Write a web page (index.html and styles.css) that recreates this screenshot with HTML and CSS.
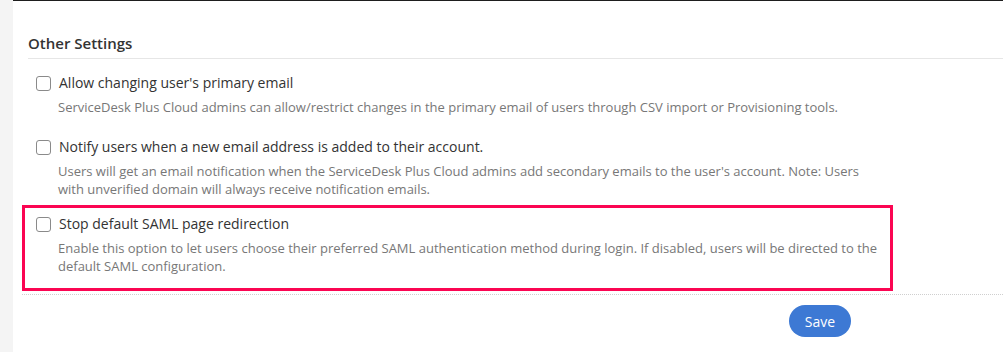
FILE: index.html
```html
<!DOCTYPE html>
<html lang="en">
<head>
<meta charset="utf-8">
<title>Other Settings</title>
<link rel="stylesheet" href="styles.css">
</head>
<body>
<div class="page">
  <aside class="rail"></aside>
  <main class="panel">
    <h2 class="settings-title">Other Settings</h2>
    <div class="options">
      <div class="opt">
        <label class="opt-head"><input type="checkbox" class="cb"><span class="opt-label">Allow changing user's primary email</span></label>
        <p class="opt-desc">ServiceDesk Plus Cloud admins can allow/restrict changes in the primary email of users through CSV import or Provisioning tools.</p>
      </div>
      <div class="opt">
        <label class="opt-head"><input type="checkbox" class="cb"><span class="opt-label">Notify users when a new email address is added to their account.</span></label>
        <p class="opt-desc">Users will get an email notification when the ServiceDesk Plus Cloud admins add secondary emails to the user's account. Note: Users with unverified domain will always receive notification emails.</p>
      </div>
      <div class="opt opt-highlight">
        <label class="opt-head"><input type="checkbox" class="cb"><span class="opt-label">Stop default SAML page redirection</span></label>
        <p class="opt-desc">Enable this option to let users choose their preferred SAML authentication method during login. If disabled, users will be directed to the default SAML configuration.</p>
      </div>
    </div>
    <div class="actions">
      <button class="btn-save" type="button">Save</button>
    </div>
  </main>
</div>
</body>
</html>
```

FILE: styles.css
```css
html, body {
  margin: 0;
  padding: 0;
  background: #ffffff;
  overflow: hidden;
}

.page {
  display: flex;
  width: 1003px;
  height: 352px;
  font-family: "Open Sans", "Liberation Sans", sans-serif;
}

.rail {
  width: 13px;
  flex: none;
  background: #f4f4f4;
}

.panel {
  flex: 1;
  border-top: 1px solid #1e1e1e;
  padding-top: 32px;
  display: flex;
  flex-direction: column;
}

.settings-title {
  margin: 0 0 0 15px;
  padding: 0 0 5px 0;
  font-size: 15px;
  font-weight: 600;
  line-height: 20px;
  color: #333333;
  border-bottom: 1px solid #e6e6e6;
}

.options {
  margin-left: 9px;
  width: 871px;
  padding-top: 14px;
  display: flex;
  flex-direction: column;
}

.opt {
  padding: 0 13px 0 14px;
}

.opt + .opt {
  margin-top: 21px;
}

.opt-head {
  display: flex;
  align-items: center;
  gap: 8px;
  height: 20px;
}

.cb {
  appearance: none;
  -webkit-appearance: none;
  margin: 0;
  width: 15px;
  height: 15px;
  border: 1px solid #8a8a8a;
  border-radius: 3px;
  background: #fff;
  flex: none;
}

.opt-label {
  font-size: 14px;
  line-height: 20px;
  color: #333333;
}

.opt-desc {
  margin: 5px 0 0 22px;
  font-size: 13px;
  line-height: 18px;
  color: #777777;
}

.opt-highlight {
  border: 3px solid #fb0552;
  padding: 6px 10px 13px 11px;
}

.opt + .opt-highlight {
  margin-top: 7px;
}

.actions {
  margin: 3px 0 0 9px;
  border-top: 1px dotted #cfcfcf;
  padding-top: 10px;
}

.btn-save {
  margin-left: 767px;
  width: 62px;
  height: 32px;
  border: none;
  border-radius: 16px;
  background: #3d79d4;
  color: #ffffff;
  font-family: "Open Sans", "Liberation Sans", sans-serif;
  font-size: 14px;
  padding: 0;
}
```
